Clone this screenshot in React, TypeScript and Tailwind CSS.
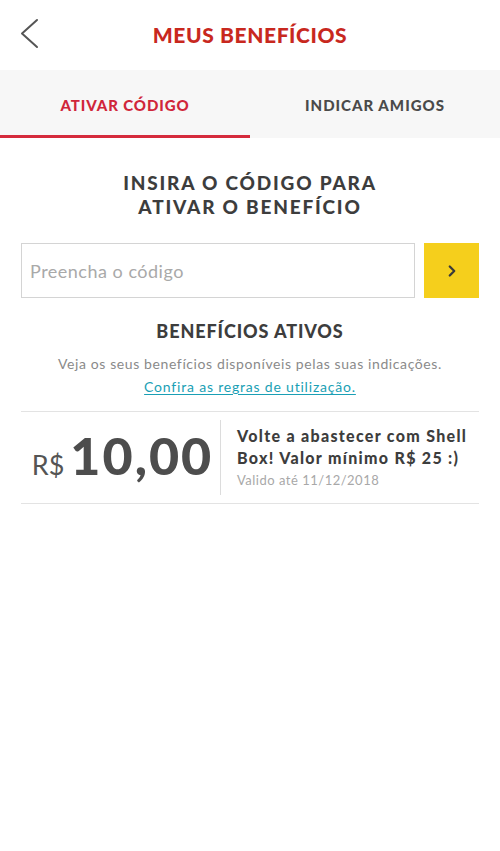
import { ChevronRight } from "lucide-react";

const font = { fontFamily: "Lato, 'Open Sans', sans-serif" };

export default function App() {
  return (
    <div className="w-[500px] h-[851px] bg-white text-[#404040]" style={font}>
      {/* header */}
      <div className="relative flex h-[70px] items-center justify-center">
        <button className="absolute left-[20px] top-[18px] text-[#555]">
          <svg width="20" height="31" viewBox="0 0 20 31" fill="none">
            <polyline
              points="17,2 2,15.5 17,29"
              stroke="currentColor"
              strokeWidth="2"
              strokeLinecap="round"
              strokeLinejoin="round"
            />
          </svg>
        </button>
        <h1 className="text-[21px] font-black tracking-[0.6px] text-[#c8281e]">
          MEUS BENEFÍCIOS
        </h1>
      </div>

      {/* tabs */}
      <div className="flex h-[68px] bg-[#f7f7f7]">
        <div className="flex w-1/2 flex-col">
          <div className="flex flex-1 items-center justify-center pt-[6px] text-[15px] font-black tracking-[0.9px] text-[#d0263a]">
            ATIVAR CÓDIGO
          </div>
          <div className="h-[3px] bg-[#d52b3c]" />
        </div>
        <div className="flex w-1/2 items-center justify-center pt-[3px] text-[15px] font-black tracking-[1px] text-[#4a4a4a]">
          INDICAR AMIGOS
        </div>
      </div>

      <div className="px-[21px]">
        <h2 className="mt-[33px] text-center text-[19px] font-black leading-[24px] tracking-[1.8px] text-[#3d3d3d]">
          INSIRA O CÓDIGO PARA
          <br />
          ATIVAR O BENEFÍCIO
        </h2>

        <div className="mt-[24px] flex gap-[9px]">
          <input
            className="h-[55px] flex-1 border border-[#d4d4d4] px-[8px] text-[18px] tracking-[0.5px] text-[#555] outline-none placeholder:text-[#a9a9a9]"
            placeholder="Preencha o código"
            style={font}
          />
          <button className="flex h-[55px] w-[55px] items-center justify-center bg-[#f5cf1c] text-[#3a3a3a]">
            <ChevronRight size={18} strokeWidth={3} />
          </button>
        </div>

        <h3 className="mt-[20px] text-center text-[18px] font-black tracking-[0.9px] text-[#3d3d3d]">
          BENEFÍCIOS ATIVOS
        </h3>
        <p className="mt-[8px] text-center text-[14px] tracking-[0.6px] text-[#8a8a8a]">
          Veja os seus benefícios disponíveis pelas suas indicações.
        </p>
        <p className="mt-[2px] text-center text-[14px] tracking-[0.8px]">
          <a className="text-[#1a9fb5] underline underline-offset-2" href="#">
            Confira as regras de utilização.
          </a>
        </p>

        <div className="mt-[14px] flex h-[93px] items-center border-y border-[#e3e3e3]">
          <div className="flex w-[199px] items-baseline justify-center gap-[6px] pl-[4px]">
            <span className="text-[27px] text-[#555]">R$</span>
            <span className="text-[52px] font-black leading-none tracking-[2px] text-[#4d4d4d]">
              10,00
            </span>
          </div>
          <div className="h-[75px] w-px bg-[#dcdcdc]" />
          <div className="flex-1 pl-[16px]">
            <p className="text-[16px] font-black leading-[22px] tracking-[1.3px] text-[#3d3d3d]">
              Volte a abastecer com Shell
              <br />
              Box! Valor mínimo R$ 25 :)
            </p>
            <p className="mt-[2px] text-[13px] tracking-[0.5px] text-[#a8a8a8]">Valido até 11/12/2018</p>
          </div>
        </div>
      </div>
    </div>
  );
}
